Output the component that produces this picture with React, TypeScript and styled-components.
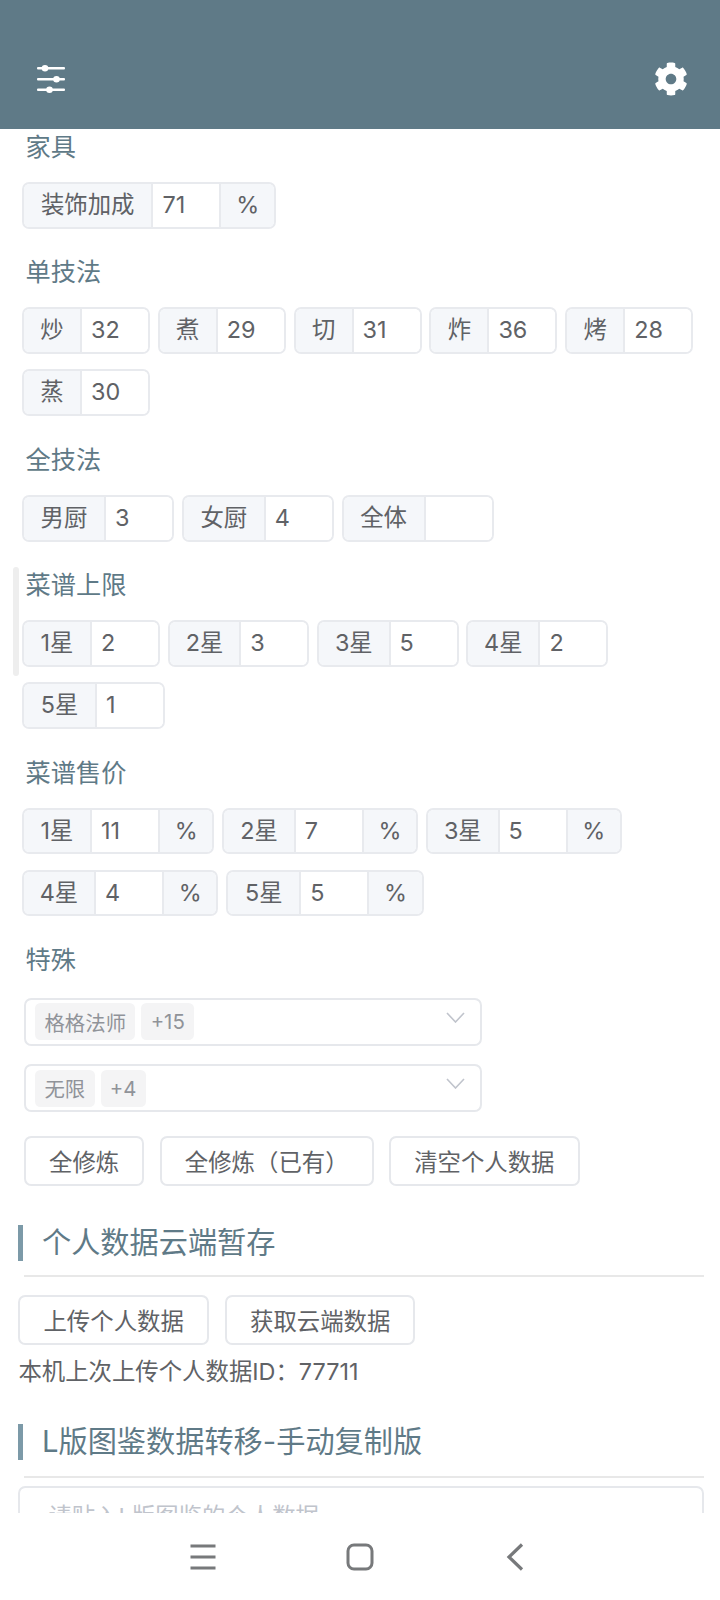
import styled, { createGlobalStyle } from 'styled-components';
import { FaCog } from 'react-icons/fa';

const GlobalStyle = createGlobalStyle`
  html, body {
    margin: 0;
    padding: 0;
    background: #fff;
    font-family: 'Inter', 'Noto Sans CJK SC', sans-serif;
  }
  * {
    box-sizing: border-box;
  }
`;

const Screen = styled.div`
  display: flex;
  flex-direction: column;
  position: relative;
  width: 720px;
  height: 1600px;
  overflow: hidden;
  background: #fff;
`;

const Header = styled.header`
  display: flex;
  flex: none;
  align-items: center;
  justify-content: space-between;
  height: 129px;
  padding: 29px 32px 0 36.3px;
  background: #5f7a87;
  color: #fff;
`;

const Content = styled.main`
  flex: 1;
  min-height: 0;
  overflow: hidden;
  padding: 0 16px 0 18.4px;
`;

const Scrollbar = styled.div`
  position: absolute;
  left: 13px;
  top: 567px;
  width: 6px;
  height: 109px;
  border-radius: 3px;
  background: #eeeeee;
`;

const Section = styled.section`
  margin-bottom: 25.6px;
  padding-left: 3.6px;
`;

const SpecialSection = styled(Section)`
  margin-bottom: 23.6px;
`;

const Title = styled.div`
  height: 34px;
  margin-bottom: 19px;
  padding-left: 3.6px;
  font-size: 25.2px;
  line-height: 36px;
  color: #5f7a87;
`;

const Groups = styled.div`
  display: flex;
  flex-wrap: wrap;
  gap: 15.2px 7.8px;
`;

const Group = styled.div`
  display: flex;
  height: 46.8px;
  border: 2px solid #e8eaee;
  border-radius: 7.2px;
  overflow: hidden;
  font-size: 23.4px;
  line-height: 42px;
  color: #606266;
`;

const Addon = styled.div<{ $width: number; $left?: boolean; $right?: boolean }>`
  width: ${(p) => p.$width}px;
  text-align: center;
  background: #f5f7fa;
  border-right: ${(p) => (p.$left ? '2px solid #e8eaee' : 'none')};
  border-left: ${(p) => (p.$right ? '2px solid #e8eaee' : 'none')};
`;

const Value = styled.div`
  width: 66px;
  padding-left: 9px;
  background: #fff;
`;

const Selects = styled.div`
  display: flex;
  flex-direction: column;
  gap: 18.4px;
  margin: 22px 0 0 2px;
`;

const SelectBox = styled.div`
  display: flex;
  align-items: center;
  gap: 6px;
  position: relative;
  width: 457.6px;
  height: 48px;
  padding-left: 9.2px;
  border: 2px solid #e6e8ec;
  border-radius: 7.2px;
`;

const Chip = styled.span`
  display: flex;
  align-items: center;
  height: 37px;
  padding: 0 9.3px;
  border-radius: 5.4px;
  background: #f4f4f5;
  color: #909399;
  font-size: 20.4px;
`;

const Chevron = styled.svg`
  position: absolute;
  right: 15px;
  top: 12px;
  width: 19px;
  height: 11px;
`;

const ButtonRow = styled.div`
  display: flex;
  gap: 16px;
`;

const OutlineButton = styled.button`
  height: 50.6px;
  padding: 0 23.1px;
  border: 2px solid #e6e8ec;
  border-radius: 7.2px;
  background: #fff;
  color: #606266;
  font-family: inherit;
  font-size: 23.4px;
`;

const ActionsRow = styled(ButtonRow)`
  gap: 15.4px;
  margin: 0 0 38.4px 5.6px;
`;

const Heading = styled.h2`
  height: 36px;
  margin: 0;
  padding-left: 18.6px;
  border-left: 5.4px solid #7c9aa8;
  font-size: 29.2px;
  font-weight: 400;
  line-height: 36px;
  color: #5f7a87;
`;

const Divider = styled.div<{ $before: number; $after: number }>`
  height: 2px;
  margin: ${(p) => p.$before}px 0 ${(p) => p.$after}px 5.6px;
  background: #e8e8e8;
`;

const Note = styled.div`
  height: 34px;
  margin: 10px 0 35px;
  font-size: 23.4px;
  line-height: 34px;
  color: #606266;
`;

const TextArea = styled.div`
  height: 120px;
  padding: 12px 28px;
  border: 2px solid #e6e8ec;
  border-radius: 7.2px;
  font-size: 23.4px;
  line-height: 34px;
  color: #c0c4cc;
`;

const NavBar = styled.nav`
  display: flex;
  flex: none;
  align-items: center;
  justify-content: center;
  gap: 129px;
  height: 87px;
  background: #fff;
  color: #77797b;
`;

const NavIcon = styled.svg`
  width: 28px;
  height: 28px;
`;

type Field = { label: string; value?: string; width: number; suffix?: boolean };

const FieldGroup = ({ label, value, width, suffix }: Field) => (
  <Group>
    <Addon $width={width} $left>
      {label}
    </Addon>
    <Value>{value}</Value>
    {suffix && (
      <Addon $width={54.5} $right>
        %
      </Addon>
    )}
  </Group>
);

const sections: { title: string; fields: Field[] }[] = [
  {
    title: '家具',
    fields: [{ label: '装饰加成', value: '71', width: 129.5, suffix: true }],
  },
  {
    title: '单技法',
    fields: [
      { label: '炒', value: '32', width: 58 },
      { label: '煮', value: '29', width: 58 },
      { label: '切', value: '31', width: 58 },
      { label: '炸', value: '36', width: 58 },
      { label: '烤', value: '28', width: 58 },
      { label: '蒸', value: '30', width: 58 },
    ],
  },
  {
    title: '全技法',
    fields: [
      { label: '男厨', value: '3', width: 82 },
      { label: '女厨', value: '4', width: 82 },
      { label: '全体', width: 82 },
    ],
  },
  {
    title: '菜谱上限',
    fields: [
      { label: '1星', value: '2', width: 68 },
      { label: '2星', value: '3', width: 71.5 },
      { label: '3星', value: '5', width: 71.5 },
      { label: '4星', value: '2', width: 72 },
      { label: '5星', value: '1', width: 73 },
    ],
  },
  {
    title: '菜谱售价',
    fields: [
      { label: '1星', value: '11', width: 68, suffix: true },
      { label: '2星', value: '7', width: 71.5, suffix: true },
      { label: '3星', value: '5', width: 71.5, suffix: true },
      { label: '4星', value: '4', width: 72, suffix: true },
      { label: '5星', value: '5', width: 73, suffix: true },
    ],
  },
];

const SlidersIcon = () => (
  <svg width="30" height="28" viewBox="0 0 30 28" fill="#fff">
    <rect x="1" y="2" width="28" height="2.6" rx="1" />
    <rect x="1" y="13" width="28" height="2.6" rx="1" />
    <rect x="1" y="23.4" width="28" height="2.6" rx="1" />
    <circle cx="9" cy="3.3" r="3.3" />
    <circle cx="20.5" cy="14.3" r="3.3" />
    <circle cx="13.5" cy="24.7" r="3.3" />
  </svg>
);

const SelectField = ({ chips }: { chips: string[] }) => (
  <SelectBox>
    {chips.map((chip) => (
      <Chip key={chip}>{chip}</Chip>
    ))}
    <Chevron viewBox="0 0 19 11" fill="none" stroke="#c0c4cc" strokeWidth="1.6">
      <path d="M1 1l8.5 9L18 1" />
    </Chevron>
  </SelectBox>
);

const App = () => (
  <Screen>
    <GlobalStyle />
    <Header>
      <SlidersIcon />
      <FaCog size={34} />
    </Header>
    <Content>
      {sections.map((section) => (
        <Section key={section.title}>
          <Title>{section.title}</Title>
          <Groups>
            {section.fields.map((field) => (
              <FieldGroup key={field.label} {...field} />
            ))}
          </Groups>
        </Section>
      ))}
      <SpecialSection>
        <Title>特殊</Title>
        <Selects>
          <SelectField chips={['格格法师', '+15']} />
          <SelectField chips={['无限', '+4']} />
        </Selects>
      </SpecialSection>
      <ActionsRow>
        <OutlineButton>全修炼</OutlineButton>
        <OutlineButton>全修炼（已有）</OutlineButton>
        <OutlineButton>清空个人数据</OutlineButton>
      </ActionsRow>
      <Heading>个人数据云端暂存</Heading>
      <Divider $before={14} $after={18} />
      <ButtonRow>
        <OutlineButton>上传个人数据</OutlineButton>
        <OutlineButton>获取云端数据</OutlineButton>
      </ButtonRow>
      <Note>本机上次上传个人数据ID：77711</Note>
      <Heading>L版图鉴数据转移-手动复制版</Heading>
      <Divider $before={16} $after={8} />
      <TextArea>请贴入L版图鉴的个人数据</TextArea>
    </Content>
    <Scrollbar />
    <NavBar>
      <NavIcon viewBox="0 0 28 28" fill="none" stroke="currentColor" strokeWidth="3.2">
        <path d="M1.5 3h25M1.5 14h25M1.5 25h25" />
      </NavIcon>
      <NavIcon viewBox="0 0 28 28" fill="none" stroke="currentColor" strokeWidth="3">
        <rect x="2" y="2" width="24" height="24" rx="6" />
      </NavIcon>
      <NavIcon viewBox="0 0 28 28" fill="none" stroke="currentColor" strokeWidth="3.2">
        <path d="M19 1.5L6 14l13 12.5" />
      </NavIcon>
    </NavBar>
  </Screen>
);

export default App;
